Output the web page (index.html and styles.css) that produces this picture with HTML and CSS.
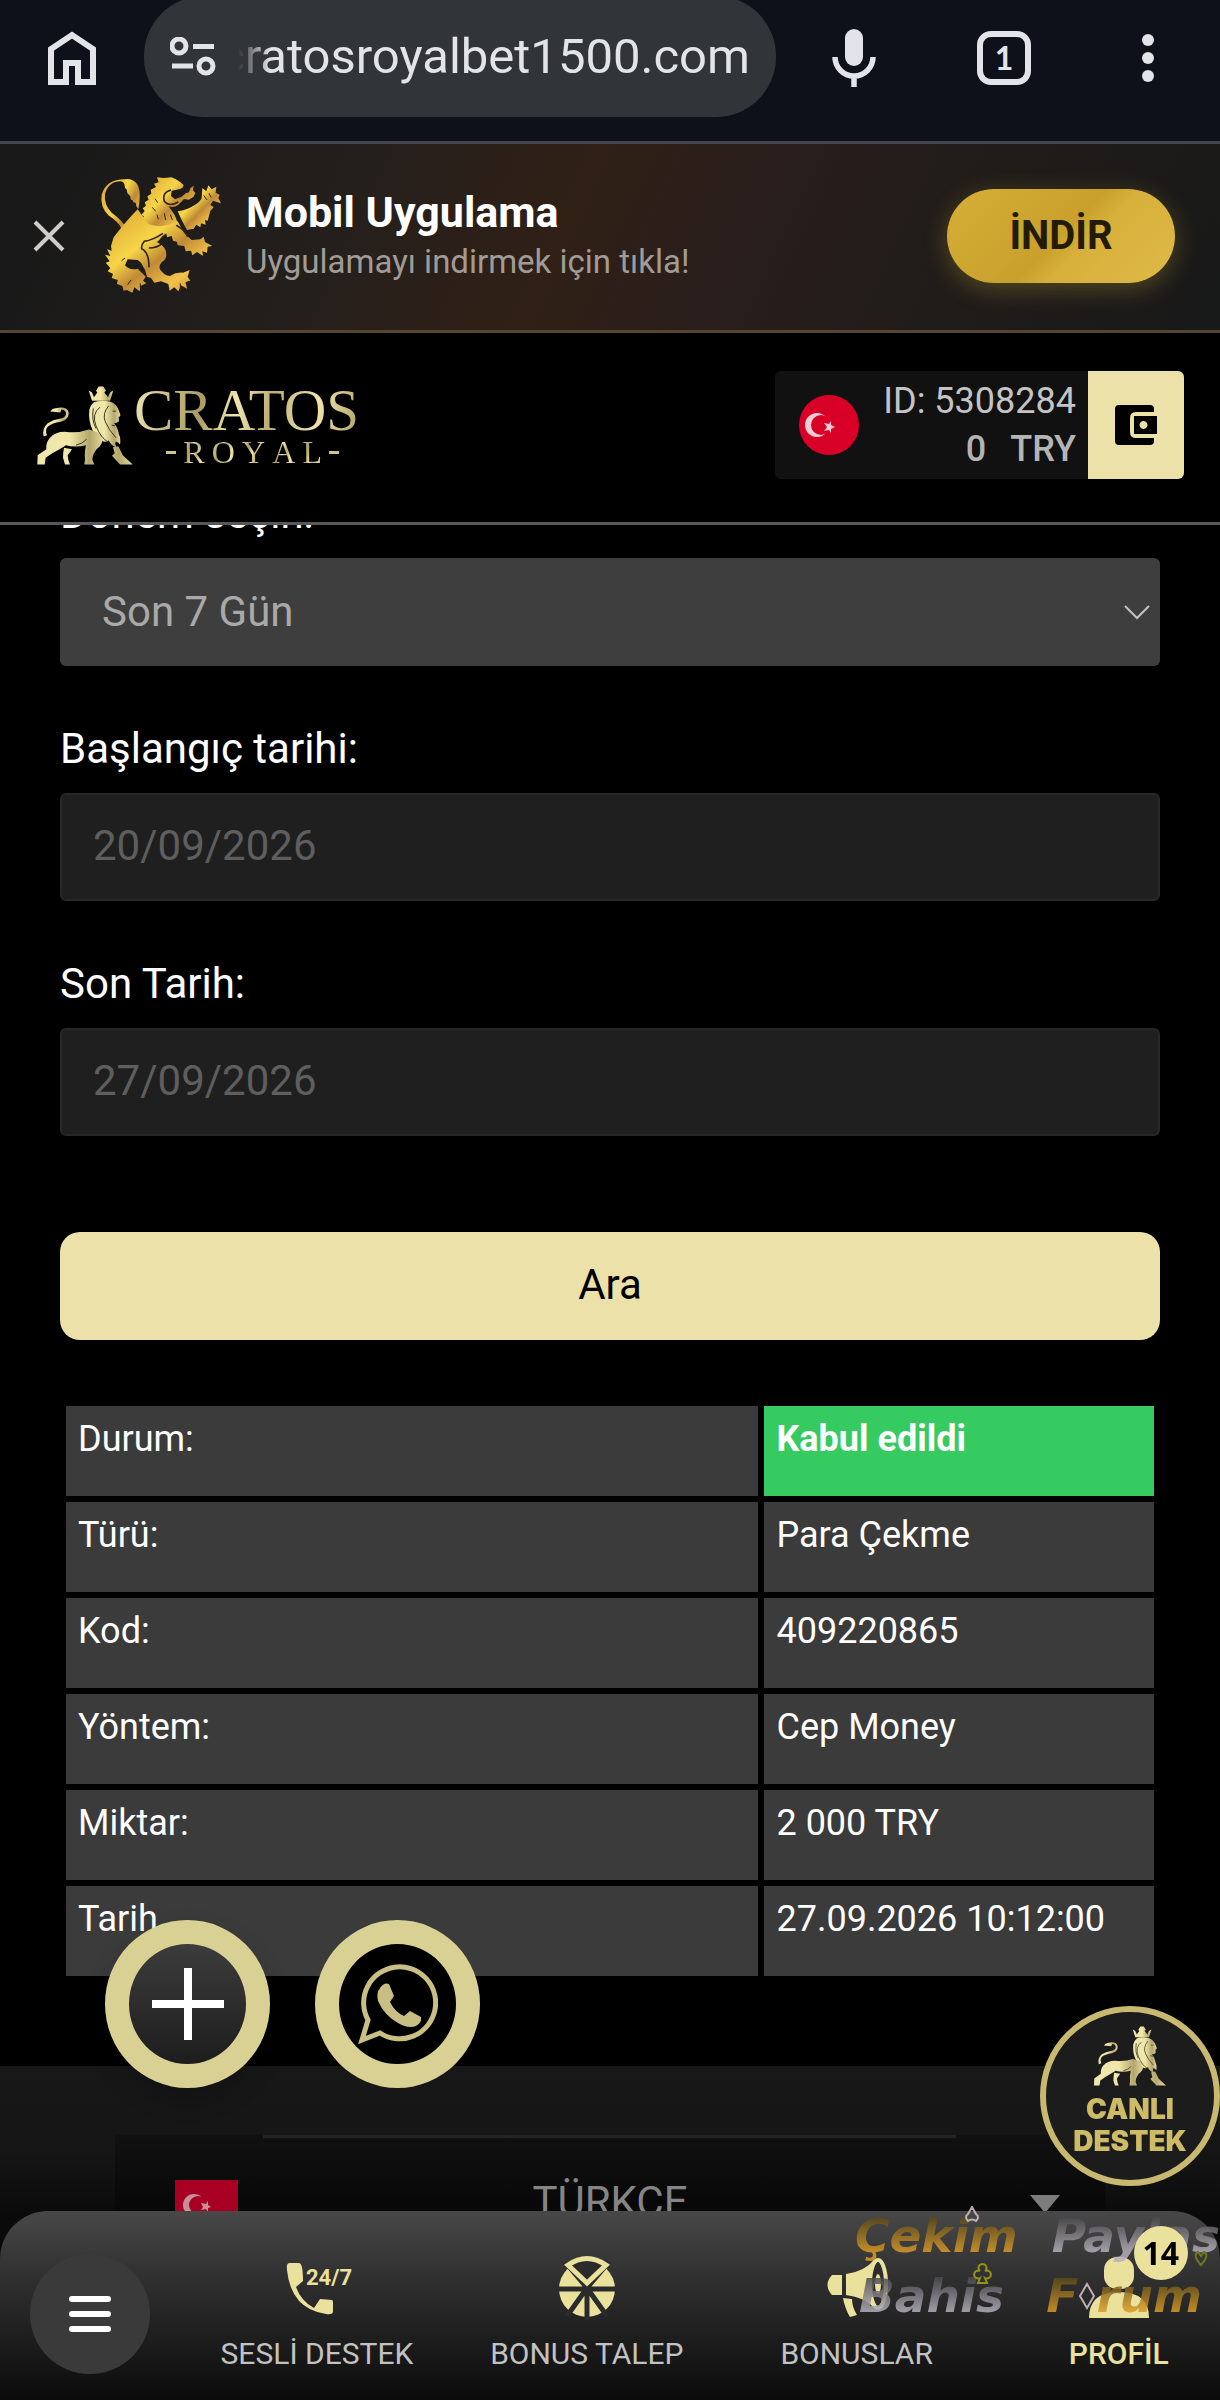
FILE: index.html
```html
<!DOCTYPE html>
<html lang="tr">
<head>
<meta charset="utf-8">
<meta name="viewport" content="width=device-width, initial-scale=1">
<title>Cratos Royal</title>
<link rel="stylesheet" href="styles.css">
</head>
<body>
<svg class="defs" aria-hidden="true">
  <defs>
    <linearGradient id="gold" x1="0" y1="0" x2="1" y2="1">
      <stop offset="0" stop-color="#d9a032"/><stop offset=".38" stop-color="#f6d548"/><stop offset=".55" stop-color="#c08a36"/><stop offset=".75" stop-color="#f2c24c"/><stop offset="1" stop-color="#b97f2c"/>
    </linearGradient>
    <linearGradient id="cream" x1="0" y1="0" x2="1" y2="0">
      <stop offset="0" stop-color="#efe7ae"/><stop offset=".5" stop-color="#f0e6a8"/><stop offset=".8" stop-color="#b5a86c"/><stop offset="1" stop-color="#e3d89c"/>
    </linearGradient>
    <symbol id="walking-lion" viewBox="20 26 294 242">
      <g fill="url(#cream)">
        <path d="M178 42l10 6 6 14 10-14-4-5 8-13h14l8 13-5 5 11 14 6-14 10-6-10 31h-54z"/>
        <path d="M190 78q26-10 54-2 16 7 22 20l7 18q2 5-5 8l1 12q-8 8-15 6 12 14 15 34 6 12 3 30-8-10-13-8-4 8 2 16-13-1-23-20-12 8-20 0-18-12-28-30-14-30-10-62 4-16 14-22z"/>
        <path d="M62 184q20-22 58-17 32 2 58-8 36 8 42 24 2 20-19 36-12 16-12 31l6 14h-30l2-14q-2-26 3-44-32 8-60 0-18 12-41 24l-20 14-3 20H24l1-28 26-18q-2-20 11-34z"/>
        <path d="M104 214l24 4q-8 12-13 18l2 14 5 14h-15l-6-20q0-16 3-30zM251 212l16-3 14 28 14 13 15 14h-38l-24-26 8-8z"/>
        <path d="M43 180q-6-24 12-40 16-10 36-13 16-3 19-13 1-14-14-15l-3 9-30-3q6-10 16-10 34-8 39 13 1 22-24 28-26 4-38 14-10 10-3 26z"/>
      </g>
      <g fill="none" stroke="#3c3822" stroke-width="3"><path d="M212 92q-26 20-12 56t38 50M238 88q-20 24-10 48t32 48M192 96q-6 34 8 60M250 104h10M140 206q20-4 32-18M247 146l10 2"/></g>
    </symbol>
    <symbol id="flag" viewBox="0 0 60 60">
      <path fill="#d80027" d="M0 0h60v60H0z"/>
      <circle cx="18" cy="30" r="12" fill="#f3ccd3"/><circle cx="22" cy="30" r="10" fill="#d80027"/>
      <path fill="#f3ccd3" d="M32 26l-2 3-5-1 3 4-3 4 5-1 2 3v-4l4-2-4-2z"/>
    </symbol>
  </defs>
</svg>

<header class="top">
  <div class="browser">
    <button class="icon-btn" aria-label="Ana sayfa"><svg width="48" height="54" viewBox="0 0 48 54"><path d="M3 51V18L24 4l21 14v33H30V32H18v19z" fill="none" stroke="#e2e4ea" stroke-width="6"/></svg></button>
    <div class="address">
      <svg class="tune" width="46" height="40" viewBox="0 0 46 40" fill="none" stroke="#e2e4ea" stroke-width="5"><circle cx="9" cy="9" r="7"/><path d="M23 9.500h21M2 29h21"/><circle cx="36" cy="29" r="7"/></svg>
      <div class="url">cratosroyalbet1500.com</div>
    </div>
    <div class="tools">
      <button class="icon-btn" aria-label="Sesli arama"><svg width="44" height="60" viewBox="0 0 44 60"><rect x="13" y="1" width="18" height="37" rx="9" fill="#e2e4ea"/><path d="M3 29a19 19 0 0 0 38 0M22 48v11" fill="none" stroke="#e2e4ea" stroke-width="5.500"/></svg></button>
      <button class="tab-count">1</button>
      <button class="icon-btn" aria-label="Menü"><svg width="12" height="50" viewBox="0 0 12 50" fill="#e2e4ea"><circle cx="6" cy="7" r="6"/><circle cx="6" cy="25" r="6"/><circle cx="6" cy="43" r="6"/></svg></button>
    </div>
  </div>

  <div class="promo">
    <button class="icon-btn" aria-label="Kapat"><svg width="32" height="32" viewBox="0 0 32 32"><path d="M2 2l28 28M30 2L2 30" stroke="#cfcdca" stroke-width="4"/></svg></button>
    <svg class="promo-lion" width="135" height="135" viewBox="0 0 405 405">
      <g fill="url(#gold)">
        <path d="M88 34q24-4 38 14 14 20 4 76-8-10-8-20-8 2-10-8-6 2-6-12-12-8-10-18-8-6-8-18-2-6-10-8-38 0-48 38-4 32 20 56 34 24 44 48 10 34 4 76l-12-2q8-42-6-74-10-20-40-40-26-28-20-62 14-46 68-46z"/>
        <path d="M186 28l20 2 24-2q24 10 36 24-2 10-14 12l-22 4-2 16 12 10 20-8 12-10 10-3 4-12 10-8-2 14 7 8-6 12-14 8-14-2-18 18q-14 10-28 4l18 26 14 36-10 10-6-8-8 10-8-10-10 12-8-12-10 14-8-12-14 10-6-12-12 8 2-16-14 2 8-14-10-2 8-12-8-4 10-12-6-8 10-8-4-10 12-8-4-10 12-8-2-12 16-8-6-10 14-4z"/>
        <path d="M248 130q28-4 46-16 22-12 26-24l2-30 12 10 6-18 10 12 14-8-2 18 12 6-4 10 8 16-24-8-8 12 10 8-10 10-8 30-8-2 2 14-14-4-2 12-12-8-8 12-20 4q-12-20-28-56z"/>
        <path d="M160 168q40 16 88-8l20 36 22 20 26-2 10-8 4 16 22 12-14 2-2 18-14-4 2 14-18-12-14 10-4-14-16 2-4-16-20-2-2-10-12-4-4-14-14 4-2-12-14 10q-6 10-14 16 30 16 28 40-2 16-14 20-8 10-6 20 10 18 30 22 20-12 40-10l20-8-6 20 8 12-14 4 4 20-18-10-8 18-12-12-14 10-4-20-22-8-20 4-10-14-12-4-6-20-12-22-10-8-30-2-8 18q14 16 38 10l14 14 10 10-8 12 10 8-18 8-2 16-16-12-6 16-16-8-10 2-4-14-16-6 2-12-18-6 4-12-16-8 8-10-14-16 12-4-14-20 16 4-10-20 14 4-2-14 8-26q40-52 72-84z"/>
      </g>
      <g fill="none" stroke="#30240f" stroke-width="5"><path d="M204 196q-30 20-56 24-10 12-8 22 22 10 22 56M228 66q-28 8-20 34 14 18 42 2M244 172q28 16 34 34M162 240q24 0 40-14"/><path stroke-width="3" d="M180 92l8 12M172 118l10 12M186 140l4 14M208 136l4 20M226 140l6 16M90 270l-10 8M98 350l10-14M136 360v-14M256 360v-14M284 340l-12 6M326 82l10 14M342 76l6 12"/></g>
    </svg>
    <div class="promo-text">
      <strong>Mobil Uygulama</strong>
      <span>Uygulamayı indirmek için tıkla!</span>
    </div>
    <button class="download">İNDİR</button>
  </div>

  <div class="site">
    <a class="logo" href="#" aria-label="Cratos Royal">
      <svg width="98" height="81"><use href="#walking-lion"/></svg>
      <span class="logo-words"><span class="logo-name">CRATOS</span><span class="logo-sub"><i></i><b>R</b><b>O</b><b>Y</b><b>A</b><b>L</b><i></i></span></span>
    </a>
    <div class="account">
      <svg class="flag-round" width="60" height="60"><use href="#flag"/></svg>
      <div class="account-text"><span>ID: 5308284</span><span class="balance"><b>0</b><b>TRY</b></span></div>
      <button class="wallet" aria-label="Cüzdan"><svg width="44" height="42" viewBox="0 0 44 42"><path d="M5 1h31q4 0 4 4v3H22q-6 0-6 6v14q0 6 6 6h18v3q0 4-4 4H5q-4 0-4-4V5q0-4 4-4z"/><path fill-rule="evenodd" d="M20 12h23v18H20zM29 17a4 4 0 1 0 1 0z"/></svg></button>
    </div>
  </div>
</header>

<main>
  <form>
    <div class="field"><label for="period">Dönem seçin:</label>
      <div class="select"><select id="period"><option>Son 7 Gün</option></select><svg width="26" height="16" viewBox="0 0 26 16"><path d="M1 2l12 12L25 2" fill="none" stroke="#c4c4c4" stroke-width="2"/></svg></div></div>
    <div class="field"><label for="from">Başlangıç tarihi:</label><input id="from" type="text" value="20/09/2026"></div>
    <div class="field"><label for="to">Son Tarih:</label><input id="to" type="text" value="27/09/2026"></div>
    <button class="search" type="button">Ara</button>
  </form>
  <table>
    <tr><th scope="row">Durum:</th><td class="ok">Kabul edildi</td></tr>
    <tr><th scope="row">Türü:</th><td>Para Çekme</td></tr>
    <tr><th scope="row">Kod:</th><td>409220865</td></tr>
    <tr><th scope="row">Yöntem:</th><td>Cep Money</td></tr>
    <tr><th scope="row">Miktar:</th><td>2 000 TRY</td></tr>
    <tr><th scope="row">Tarih</th><td>27.09.2026 10:12:00</td></tr>
  </table>
</main>

<footer>
  <button class="language">
    <svg width="63" height="42" viewBox="0 0 63 42"><path fill="#a80022" d="M0 0h63v42H0z"/><circle cx="19" cy="25" r="11" fill="#c78f99"/><circle cx="23" cy="25" r="9" fill="#a80022"/><path fill="#c78f99" d="M33 21l-2 3-5-1 2 4-2 3 5-1 2 3v-4l3-1-3-2z"/></svg>
    <span>TÜRKÇE</span>
    <svg width="30" height="18" viewBox="0 0 30 18"><path d="M0 0h30L15 18z" fill="#7c7c7c"/></svg>
  </button>
</footer>

<div class="floating">
  <button class="fab" aria-label="Ekle"><svg width="74" height="74" viewBox="0 0 74 74"><path d="M37 1v72M1 37h72" stroke="#fff" stroke-width="8"/></svg></button>
  <button class="fab fab-chat" aria-label="WhatsApp"><svg width="80" height="80" viewBox="0 0 80 80"><path d="M4 76l6-20A36 36 0 1 1 22 69z" fill="none" stroke="#c9be84" stroke-width="5"/><path d="M22 24q4-6 9-4l5 12-4 6q5 10 14 14l6-5 11 6q1 6-5 9-8 3-18-3-14-8-20-22-2-8 2-13z" fill="#c9be84"/></svg></button>
</div>
<button class="live"><svg width="74" height="64"><use href="#walking-lion"/></svg><span>CANLI<br>DESTEK</span></button>

<nav>
  <button class="menu" aria-label="Menü"><svg width="42" height="38" viewBox="0 0 42 38"><path d="M3 4h36M3 19h36M3 34h36" stroke="#fff" stroke-width="6" stroke-linecap="round"/></svg></button>
  <a class="tab" href="#"><svg width="62" height="62" viewBox="0 0 62 62"><path d="M3 7h10q4 0 4 18l-7 6q5 14 18 21l6-9 12 1q1 0 1 3v9q-1 3-7 2Q5 53 1 14q-1-6 2-7z" fill="#eae19d"/><text x="20" y="29" class="hours">24/7</text></svg><span>SESLİ DESTEK</span></a>
  <a class="tab" href="#"><svg width="62" height="62" viewBox="0 0 62 62"><circle cx="31" cy="33" r="28" fill="#eae19d"/><path d="M31 32L9 6M31 32L53 6M0 33h62M31 32v32M31 32L11 60M31 32l20 28" stroke="#2b2b2b" stroke-width="5"/><path d="M31 27L12 9q19-13 38 0z" fill="#2b2b2b" stroke="#eae19d" stroke-width="5"/></svg><span>BONUS TALEP</span></a>
  <a class="tab" href="#"><svg width="62" height="62" viewBox="0 0 62 62"><path d="M16 19v20H6q-9-10 0-20zM20 18q18-2 29-15v50q-10-12-29-14zM17 42l9 1q0 8 5 16l-7 2q-5-8-7-19z" fill="#eae19d"/><ellipse cx="52" cy="28" rx="8" ry="24" fill="#2d2d2d" stroke="#eae19d" stroke-width="4"/><ellipse cx="52" cy="28" rx="3" ry="10" fill="#eae19d"/></svg><span>BONUSLAR</span></a>
  <a class="tab tab-on" href="#"><svg width="62" height="62" viewBox="0 0 62 62" fill="#eae19d"><rect x="16" y="1" width="30" height="32" rx="13"/><path d="M1 62q0-26 30-26t30 26z"/></svg><em class="badge">14</em><span>PROFİL</span></a>
  <div class="mark" aria-hidden="true">
    <div><span class="amber">Çekim</span><span class="silver">Paylas</span></div>
    <div class="mark-second"><span class="silver">Bahis</span><span class="amber forum">F<svg width="18" height="28" viewBox="0 0 18 28"><path d="M9 2l7 12-7 12-7-12z" fill="none" stroke="#d9c5cd" stroke-width="2"/></svg>rum</span></div>
    <svg class="suits" width="244" height="100" viewBox="0 0 244 100" fill="none" stroke-width="2"><path d="M3 15q-4-4 0-7l4-7 4 7q4 3 0 7-4-3-8 0z" stroke="#d9c5cd"/><path d="M15 72a4 4 0 1 1 0-7 4 4 0 1 1 5 0 4 4 0 1 1 0 7l2 5h-9z" stroke="#a5a512"/><path d="M236 59q-9-10-3-13l3 4 3-4q6 3-3 13z" stroke="#7d8019"/></svg>
  </div>
</nav>
</body>
</html>
```
FILE: styles.css
```css
* { box-sizing: border-box; }
body {
  margin: 0;
  min-height: 100vh;
  display: flex;
  flex-direction: column;
  background: #000;
  color: #fff;
  font-family: Roboto, "Liberation Sans", sans-serif;
}
button, input, select { font: inherit; color: inherit; border: 0; margin: 0; }
button { padding: 0; background: none; }
svg { display: block; flex: none; }
a { color: inherit; text-decoration: none; }
.defs { position: absolute; width: 0; height: 0; }
.icon-btn { display: flex; }

/* browser bar */
.top { position: relative; z-index: 2; background: #000; }
.browser {
  display: flex;
  align-items: center;
  height: 144px;
  padding: 0 66px 26px 48px;
  background: #0e1119;
  border-bottom: 3px solid #45464b;
}
.address {
  display: flex;
  align-items: center;
  align-self: stretch;
  flex: 0 1 632px;
  min-width: 0;
  gap: 22px;
  margin: -4px 0 -2px 48px;
  padding: 0 26px;
  background: #313439;
  border-radius: 60px;
}
.url {
  flex: 1;
  min-width: 0;
  display: flex;
  justify-content: flex-end;
  overflow: hidden;
  color: #e2e4ea;
  font-size: 49px;
  line-height: 64px;
  white-space: nowrap;
  -webkit-mask-image: linear-gradient(90deg, transparent, #000 32px);
  mask-image: linear-gradient(90deg, transparent, #000 32px);
}
.tools { flex: 1; display: flex; align-items: center; justify-content: space-between; padding-left: 56px; }
.tab-count {
  width: 54px;
  height: 54px;
  margin-right: 10px;
  border: 6px solid #e2e4ea;
  border-radius: 14px;
  color: #e2e4ea;
  font: 700 32px/40px Lato, sans-serif;
}

/* app promo */
.promo {
  display: flex;
  align-items: center;
  height: 189px;
  padding: 0 45px 3px 33px;
  border-bottom: 3px solid #554631;
  background: linear-gradient(115deg, #191919 5%, #241f1c 28%, #302016 46%, #291e1c 60%, #1f1c19 80%, #181919);
}
.promo-lion { margin-left: 30px; }
.promo-text { flex: 1; display: flex; flex-direction: column; margin-left: 16px; }
.promo-text strong { font-size: 43px; line-height: 52px; }
.promo-text span { color: #a19b97; font-size: 33px; line-height: 48px; }
.download {
  width: 228px;
  height: 94px;
  border-radius: 47px;
  background: linear-gradient(135deg, #d4af37, #c9a02c 50%, #d6b03a 60%, #e0ba48);
  box-shadow: 0 6px 24px rgba(212, 175, 55, .3);
  color: #211b08;
  font-size: 40px;
  font-weight: 700;
}

/* site header */
.site {
  display: flex;
  align-items: center;
  justify-content: space-between;
  height: 192px;
  padding: 0 36px 5px;
  border-bottom: 3px solid #575757;
}
.logo { display: flex; align-items: center; }
.logo-words { display: flex; flex-direction: column; font-family: "Liberation Serif", serif; color: #d5ca8c; }
.logo-name, .logo-sub b {
  background: linear-gradient(100deg, #efe7b0, #a99c62 30%, #f0e6ab 45%, #bcae75 60%, #efe5ab 80%, #b0a368);
  -webkit-background-clip: text;
  background-clip: text;
  color: transparent;
}
.logo-name { font-size: 59px; line-height: 54px; }
.logo-sub { display: flex; align-items: center; justify-content: space-between; padding: 0 20px 0 32px; font-size: 32px; line-height: 30px; }
.logo-sub b { font-weight: 400; }
.logo-sub i { width: 10px; height: 3px; background: #cfc48a; }
.account { display: flex; align-items: center; height: 108px; background: #111; border-radius: 6px; overflow: hidden; }
.flag-round { border-radius: 50%; margin: 0 24px; }
.account-text { display: flex; flex-direction: column; align-items: flex-end; margin-right: 12px; color: #c4c4c4; font-size: 36px; line-height: 48px; }
.balance { display: flex; gap: 24px; color: #b4b4b4; }
.balance b { font-weight: 500; }
.wallet { display: flex; align-items: center; justify-content: center; width: 96px; height: 108px; background: #ece1a9; }

/* transaction filter */
main { margin-top: -35px; padding: 0 60px 84px; }
form { display: flex; flex-direction: column; gap: 59px; }
.field { display: flex; flex-direction: column; gap: 20px; }
.field label { font-size: 42px; line-height: 48px; }
.field input, .field select { width: 100%; height: 108px; font-size: 42px; border-radius: 6px; }
.field input { padding: 0 31px 3px; background: #1f1f1f; border: 2px solid #282828; color: #5e5e5e; }
.select { display: grid; align-items: center; }
.select > * { grid-area: 1 / 1; }
.select select { appearance: none; padding: 0 42px 2px; background: #3e3e3e; color: #a9a9a9; }
.select svg { justify-self: end; margin-right: 10px; pointer-events: none; }
.search { height: 108px; margin-top: 37px; padding-bottom: 3px; border-radius: 20px; background: #ece1a9; color: #000; font-size: 42px; }

/* transaction record */
table { width: 100%; margin-top: 60px; table-layout: fixed; border-spacing: 6px; font-size: 36px; line-height: 42px; }
th, td { height: 90px; padding: 12px; background: #3b3b3b; font-weight: 400; text-align: left; vertical-align: top; }
th { width: 64%; }
.ok { background: #36cb61; font-weight: 700; }

footer { flex: 1; padding: 69px 115px 0; background: linear-gradient(#181818 0, #151515 90px, #0a0a0a 150px); }
.language {
  display: grid;
  grid-template-columns: 63px 1fr 30px;
  align-items: start;
  width: 100%;
  height: 120px;
  padding: 45px 45px 0 60px;
  background: linear-gradient(90deg, transparent 15%, #242424 15%, #242424 85%, transparent 85%) top / 100% 3px no-repeat, linear-gradient(#111, #080808 70px);
  color: #858585;
  font-size: 42px;
  line-height: 44px;
}
.language span { padding-right: 48px; }
.language svg:last-child { margin-top: 15px; }

/* bottom bar */
nav {
  position: fixed;
  inset: auto 0 0;
  display: flex;
  align-items: flex-end;
  height: 189px;
  padding: 0 0 26px 30px;
  border-radius: 48px 48px 0 0;
  background: linear-gradient(#484848, #303030 35%, #0b0b0b);
  color: #c2c2c2;
  font-size: 30px;
  line-height: 40px;
}
.menu { flex: none; display: flex; align-items: center; justify-content: center; width: 120px; height: 120px; margin-right: 32px; border-radius: 50%; background: #3a3a3a; }
.tab { position: relative; flex: 4 1 0; display: flex; flex-direction: column; align-items: center; gap: 16px; white-space: nowrap; }
.tab svg { overflow: visible; }
.tab-on { flex-grow: 3; margin-left: 26px; color: #eae19d; font-weight: 500; }
.hours { font: 700 22px Roboto, sans-serif; fill: #eae19d; }
.badge { position: absolute; top: -30px; left: calc(50% + 15px); z-index: 1; width: 54px; height: 54px; border-radius: 50%; background: #eae19d; color: #000; font: 700 32px/54px "Noto Sans", sans-serif; text-align: center; }

/* floating buttons */
.floating { position: fixed; left: 105px; bottom: 312px; display: flex; gap: 45px; }
.fab { display: flex; align-items: center; justify-content: center; width: 165px; height: 168px; border: 24px solid #d9d093; border-radius: 50%; background: linear-gradient(#3c3c3c, #1d1d1d); box-shadow: 0 12px 24px rgba(0, 0, 0, .2); }
.fab-chat { background: #000; box-shadow: none; }
.live { position: fixed; right: 0; bottom: 214px; display: flex; flex-direction: column; align-items: center; width: 180px; height: 180px; padding-top: 12px; border: 6px solid #c9b970; border-radius: 50%; background: #1c1c1c; color: #cdbb67; font: 900 28px/32px Inter, sans-serif; }
.live span { margin-top: 5px; }

/* forum stamp */
.mark { position: absolute; right: 0; bottom: 74px; width: 365px; font: italic 700 47px/60px "DejaVu Sans", sans-serif; opacity: .85; pointer-events: none; }
.mark div { display: flex; justify-content: space-between; }
.mark .mark-second { padding: 0 18px 0 4px; }
.amber, .silver { -webkit-background-clip: text; background-clip: text; color: transparent; }
.amber { background-image: linear-gradient(#5a4a1c 20%, #d99a28 75%); }
.silver { background-image: linear-gradient(#4a4a4c 20%, #b4afba 75%); }
.forum { display: flex; align-items: center; }
.suits { position: absolute; top: 0; left: 110px; }
```
